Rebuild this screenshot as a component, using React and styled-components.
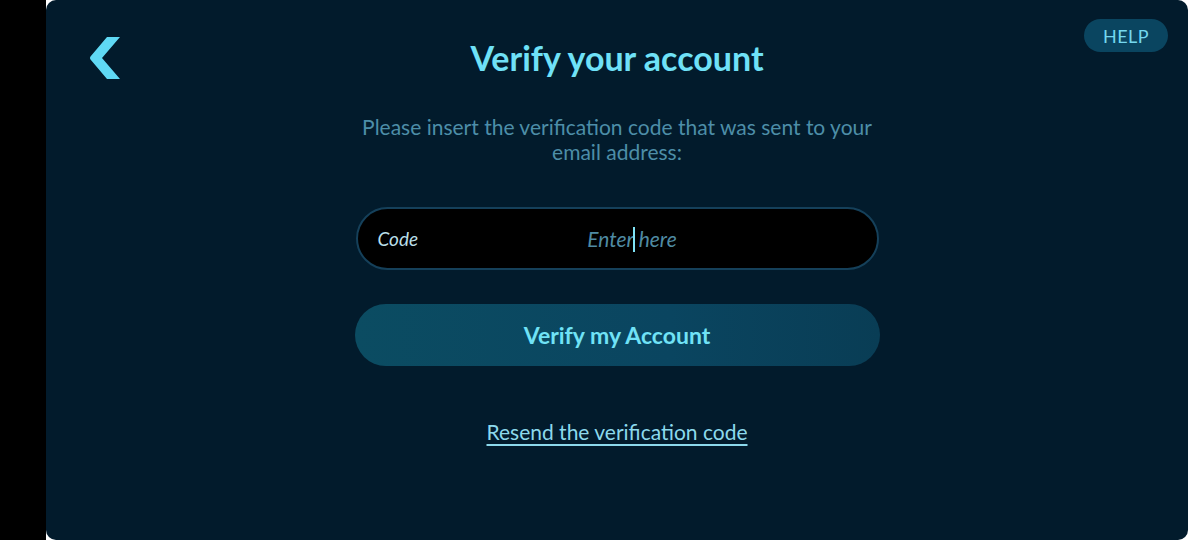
import React from 'react';
import styled, { createGlobalStyle } from 'styled-components';

const GlobalStyle = createGlobalStyle`
  html, body {
    margin: 0;
    padding: 0;
    background: #ffffff;
  }
  body {
    font-family: Lato, "Noto Sans", sans-serif;
  }
`;

const Screen = styled.div`
  display: flex;
  width: 1188px;
  height: 540px;
  overflow: hidden;
`;

const SideStrip = styled.div`
  width: 46px;
  flex-shrink: 0;
  background: #000000;
`;

const Panel = styled.main`
  flex: 1;
  position: relative;
  background: #021b2c;
  border-radius: 10px;
  display: flex;
  flex-direction: column;
  align-items: center;
  padding-top: 38px;
  box-sizing: border-box;
`;

const BackButton = styled.button`
  position: absolute;
  left: 42px;
  top: 37px;
  width: 34px;
  height: 42px;
  padding: 0;
  border: none;
  background: transparent;
  cursor: pointer;
  line-height: 0;
`;

const HelpButton = styled.button`
  position: absolute;
  right: 20px;
  top: 19px;
  width: 84px;
  height: 33px;
  border: none;
  border-radius: 17px;
  background: #0a4560;
  color: #74d8ef;
  font-family: Lato, sans-serif;
  font-size: 18px;
  letter-spacing: 0.5px;
`;

const Title = styled.h1`
  margin: 0;
  font-size: 34px;
  font-weight: 700;
  color: #6fe1f7;
  line-height: 40px;
`;

const Subtitle = styled.p`
  margin: 36px 0 0;
  width: 520px;
  text-align: center;
  font-size: 21px;
  line-height: 25px;
  color: #4d8ea8;
`;

const Field = styled.label`
  margin-top: 43px;
  width: 523px;
  height: 63px;
  box-sizing: border-box;
  border: 2px solid #15405a;
  border-radius: 32px;
  background: #000000;
  display: flex;
  align-items: center;
  padding: 0 20px;
  position: relative;
`;

const FieldLabel = styled.span`
  font-size: 19px;
  font-style: italic;
  color: #b9dfe8;
  width: 120px;
`;

const FieldInput = styled.div`
  position: absolute;
  left: 30px;
  right: 0;
  text-align: center;
  font-size: 21px;
  font-style: italic;
  color: #4f8ba3;
  pointer-events: none;
`;

const Caret = styled.span`
  display: inline-block;
  width: 2px;
  height: 25px;
  margin: 0 4px 0 -1px;
  background: #7fe3f5;
  vertical-align: -5px;
`;

const SubmitButton = styled.button`
  margin-top: 34px;
  width: 525px;
  height: 62px;
  border: none;
  border-radius: 31px;
  background: linear-gradient(90deg, #0b4c62 0%, #0a4560 60%, #093d55 100%);
  color: #70e2f6;
  font-family: Lato, sans-serif;
  font-size: 23px;
  font-weight: 700;
`;

const ResendLink = styled.a`
  margin-top: 53px;
  font-size: 21px;
  color: #8cd9ec;
  text-decoration: underline;
  text-underline-offset: 4px;
  text-decoration-thickness: 1.5px;
  cursor: pointer;
`;

function Chevron() {
  return (
    <svg width="34" height="42" viewBox="0 0 34 42">
      <path
        d="M19 0 L32 0 L14 21 L32 42 L19 42 L2.5 22.5 Q1.3 21 2.5 19.5 Z"
        fill="#5fd9f4"
      />
    </svg>
  );
}

export default function App() {
  return (
    <>
      <GlobalStyle />
      <Screen>
        <SideStrip />
        <Panel>
          <BackButton aria-label="Back">
            <Chevron />
          </BackButton>
          <HelpButton>HELP</HelpButton>
          <Title>Verify your account</Title>
          <Subtitle>
            Please insert the verification code that was sent to your email address:
          </Subtitle>
          <Field>
            <FieldLabel>Code</FieldLabel>
            <FieldInput>
              Enter<Caret />here
            </FieldInput>
          </Field>
          <SubmitButton>Verify my Account</SubmitButton>
          <ResendLink>Resend the verification code</ResendLink>
        </Panel>
      </Screen>
    </>
  );
}
